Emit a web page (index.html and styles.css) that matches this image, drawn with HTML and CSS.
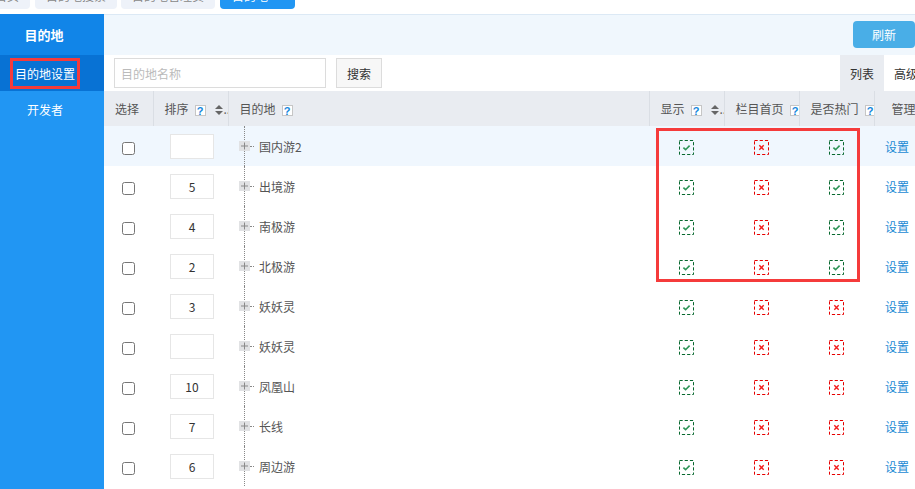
FILE: index.html
```html
<!DOCTYPE html>
<html lang="zh-CN">
<head>
    <meta charset="UTF-8">
    <meta name="viewport" content="width=device-width, initial-scale=1.0">
    <title>目的地设置</title>
    <link rel="stylesheet" href="styles.css">
</head>
<body>

    <svg class="defs" width="0" height="0" aria-hidden="true">
        <symbol id="ok" viewBox="0 0 15 15">
            <rect x="0.5" y="0.5" width="14" height="14" fill="none" stroke="#08692f" stroke-dasharray="3.2 2"/>
            <path d="M4.4 7.6 L6.6 9.7 L10.6 5.6" fill="none" stroke="#2e9558" stroke-width="1.6"/>
        </symbol>
        <symbol id="no" viewBox="0 0 15 15">
            <rect x="0.5" y="0.5" width="14" height="14" fill="none" stroke="#e60000" stroke-dasharray="3.2 2"/>
            <path d="M5.3 5.3 L9.7 9.7 M9.7 5.3 L5.3 9.7" fill="none" stroke="#f31c1c" stroke-width="1.4"/>
        </symbol>
        <symbol id="plus" viewBox="0 0 11 10">
            <path d="M2 5 H9 M5.5 1.5 V8.5" fill="none" stroke="#8a8a8a" stroke-width="1"/>
        </symbol>
        <symbol id="sorter" viewBox="0 0 8 10">
            <path d="M0 4 L4 0 L8 4 Z M0 6 L4 10 L8 6 Z" fill="#666"/>
        </symbol>
    </svg>

    <div class="tabs-top">
        <span class="tab tab-cut">首页</span>
        <span class="tab">目的地搜索</span>
        <span class="tab">目的地管理员</span>
        <span class="tab tab-active">目的地 ×</span>
    </div>

    <div class="layout">
        <aside class="side">
            <div class="side-title">目的地</div>
            <a href="#" class="side-item active"><span class="side-mark">目的地设置</span></a>
            <a href="#" class="side-item">开发者</a>
        </aside>

        <main class="main">
            <div class="main-head">
                <button type="button" class="btn-refresh">刷新</button>
            </div>

            <div class="toolbar">
                <form class="search">
                    <input type="text" class="search-input" placeholder="目的地名称">
                    <button type="button" class="btn-search">搜索</button>
                </form>
                <div class="view-tabs">
                    <span class="view-tab current">列表</span>
                    <span class="view-tab">高级</span>
                </div>
            </div>

            <div class="grid">
                <table class="table">
                    <colgroup>
                        <col style="width:49px">
                        <col style="width:75px">
                        <col style="width:421px">
                        <col style="width:75px">
                        <col style="width:75px">
                        <col style="width:75px">
                        <col style="width:80px">
                    </colgroup>
                    <thead>
                        <tr>
                            <th>选择</th>
                            <th>排序<span class="help">?</span><svg class="sort-icon"><use href="#sorter"/></svg><span class="more">..</span></th>
                            <th>目的地<span class="help">?</span></th>
                            <th>显示<span class="help">?</span><svg class="sort-icon"><use href="#sorter"/></svg><span class="more">..</span></th>
                            <th>栏目首页<span class="help">?</span></th>
                            <th>是否热门<span class="help">?</span></th>
                            <th class="h-manage">管理</th>
                        </tr>
                    </thead>
                    <tbody>
                        <tr class="hover">
                            <td class="c-check"><input type="checkbox"></td>
                            <td class="c-sort"><input type="text" class="sort-input" value=""></td>
                            <td class="c-tree"><div class="node"><svg class="node-plus"><use href="#plus"/></svg><span class="node-dash"></span>国内游2</div></td>
                            <td class="c-flag"><svg class="flag"><use href="#ok"/></svg></td>
                            <td class="c-flag"><svg class="flag"><use href="#no"/></svg></td>
                            <td class="c-flag"><svg class="flag"><use href="#ok"/></svg></td>
                            <td class="c-manage"><a href="#">设置</a></td>
                        </tr>
                        <tr>
                            <td class="c-check"><input type="checkbox"></td>
                            <td class="c-sort"><input type="text" class="sort-input" value="5"></td>
                            <td class="c-tree"><div class="node"><svg class="node-plus"><use href="#plus"/></svg><span class="node-dash"></span>出境游</div></td>
                            <td class="c-flag"><svg class="flag"><use href="#ok"/></svg></td>
                            <td class="c-flag"><svg class="flag"><use href="#no"/></svg></td>
                            <td class="c-flag"><svg class="flag"><use href="#ok"/></svg></td>
                            <td class="c-manage"><a href="#">设置</a></td>
                        </tr>
                        <tr>
                            <td class="c-check"><input type="checkbox"></td>
                            <td class="c-sort"><input type="text" class="sort-input" value="4"></td>
                            <td class="c-tree"><div class="node"><svg class="node-plus"><use href="#plus"/></svg><span class="node-dash"></span>南极游</div></td>
                            <td class="c-flag"><svg class="flag"><use href="#ok"/></svg></td>
                            <td class="c-flag"><svg class="flag"><use href="#no"/></svg></td>
                            <td class="c-flag"><svg class="flag"><use href="#ok"/></svg></td>
                            <td class="c-manage"><a href="#">设置</a></td>
                        </tr>
                        <tr>
                            <td class="c-check"><input type="checkbox"></td>
                            <td class="c-sort"><input type="text" class="sort-input" value="2"></td>
                            <td class="c-tree"><div class="node"><svg class="node-plus"><use href="#plus"/></svg><span class="node-dash"></span>北极游</div></td>
                            <td class="c-flag"><svg class="flag"><use href="#ok"/></svg></td>
                            <td class="c-flag"><svg class="flag"><use href="#no"/></svg></td>
                            <td class="c-flag"><svg class="flag"><use href="#ok"/></svg></td>
                            <td class="c-manage"><a href="#">设置</a></td>
                        </tr>
                        <tr>
                            <td class="c-check"><input type="checkbox"></td>
                            <td class="c-sort"><input type="text" class="sort-input" value="3"></td>
                            <td class="c-tree"><div class="node"><svg class="node-plus"><use href="#plus"/></svg><span class="node-dash"></span>妖妖灵</div></td>
                            <td class="c-flag"><svg class="flag"><use href="#ok"/></svg></td>
                            <td class="c-flag"><svg class="flag"><use href="#no"/></svg></td>
                            <td class="c-flag"><svg class="flag"><use href="#no"/></svg></td>
                            <td class="c-manage"><a href="#">设置</a></td>
                        </tr>
                        <tr>
                            <td class="c-check"><input type="checkbox"></td>
                            <td class="c-sort"><input type="text" class="sort-input" value=""></td>
                            <td class="c-tree"><div class="node"><svg class="node-plus"><use href="#plus"/></svg><span class="node-dash"></span>妖妖灵</div></td>
                            <td class="c-flag"><svg class="flag"><use href="#ok"/></svg></td>
                            <td class="c-flag"><svg class="flag"><use href="#no"/></svg></td>
                            <td class="c-flag"><svg class="flag"><use href="#no"/></svg></td>
                            <td class="c-manage"><a href="#">设置</a></td>
                        </tr>
                        <tr>
                            <td class="c-check"><input type="checkbox"></td>
                            <td class="c-sort"><input type="text" class="sort-input" value="10"></td>
                            <td class="c-tree"><div class="node"><svg class="node-plus"><use href="#plus"/></svg><span class="node-dash"></span>凤凰山</div></td>
                            <td class="c-flag"><svg class="flag"><use href="#ok"/></svg></td>
                            <td class="c-flag"><svg class="flag"><use href="#no"/></svg></td>
                            <td class="c-flag"><svg class="flag"><use href="#no"/></svg></td>
                            <td class="c-manage"><a href="#">设置</a></td>
                        </tr>
                        <tr>
                            <td class="c-check"><input type="checkbox"></td>
                            <td class="c-sort"><input type="text" class="sort-input" value="7"></td>
                            <td class="c-tree"><div class="node"><svg class="node-plus"><use href="#plus"/></svg><span class="node-dash"></span>长线</div></td>
                            <td class="c-flag"><svg class="flag"><use href="#ok"/></svg></td>
                            <td class="c-flag"><svg class="flag"><use href="#no"/></svg></td>
                            <td class="c-flag"><svg class="flag"><use href="#no"/></svg></td>
                            <td class="c-manage"><a href="#">设置</a></td>
                        </tr>
                        <tr>
                            <td class="c-check"><input type="checkbox"></td>
                            <td class="c-sort"><input type="text" class="sort-input" value="6"></td>
                            <td class="c-tree"><div class="node"><svg class="node-plus"><use href="#plus"/></svg><span class="node-dash"></span>周边游</div></td>
                            <td class="c-flag"><svg class="flag"><use href="#ok"/></svg></td>
                            <td class="c-flag"><svg class="flag"><use href="#no"/></svg></td>
                            <td class="c-flag"><svg class="flag"><use href="#no"/></svg></td>
                            <td class="c-manage"><a href="#">设置</a></td>
                        </tr>
                    </tbody>
                </table>

                <!-- highlight box drawn over the flag columns -->
                <div class="mark"></div>
            </div>
        </main>
    </div>

</body>
</html>
```

FILE: styles.css
```css
*,
*::before,
*::after {
    box-sizing: border-box;
}

html,
body {
    height: 100%;
}

body {
    font-family: "Noto Sans CJK SC", "Noto Sans", sans-serif;
    font-size: 12px;
    color: #555;
    padding: 0;
    margin: 0;
    overflow: hidden;
    background-color: #fff;
}

a {
    text-decoration: none;
}

button,
input {
    font: inherit;
}

.defs {
    position: absolute;
    width: 0;
    height: 0;
}

/* top tab strip, scrolled so only the bottom of the tabs shows */
.tabs-top {
    height: 14px;
    display: flex;
    align-items: flex-end;
    gap: 4px;
    padding-bottom: 5px;
    overflow: hidden;
}

.tab {
    flex-shrink: 0;
    height: 30px;
    line-height: 20px;
    padding: 7px 11px 0;
    background-color: #eef2f9;
    color: #888;
    border-radius: 0 0 4px 4px;
    white-space: nowrap;
}

.tab-cut {
    margin-left: -16px;
    margin-right: 1px;
}

.tab-active {
    background-color: #2196f3;
    color: #fff;
    margin-left: 1px;
    padding: 7px 12px 0;
}

.layout {
    display: flex;
    height: calc(100% - 14px);
}

/* sidebar */
.side {
    width: 104px;
    flex-shrink: 0;
    background-color: #2196f3;
    display: flex;
    flex-direction: column;
}

.side-title {
    height: 41px;
    line-height: 41px;
    padding-right: 16px;
    text-align: center;
    background-color: #1185e8;
    color: #fff;
    font-size: 13px;
    font-weight: bold;
}

.side-item {
    height: 36px;
    display: flex;
    align-items: center;
    justify-content: center;
    padding-right: 14px;
    color: #fff;
    font-size: 12px;
}

.side-item.active {
    background-color: #0872d4;
}

.side-mark {
    display: inline-block;
    line-height: 13px;
    padding: 6px 2px;
    border: 3px solid #f53b3b;
}

/* main */
.main {
    flex: 1;
    min-width: 0;
    overflow: hidden;
}

.main-head {
    height: 41px;
    border-top: 1px solid #dce9f5;
    background-color: #f0f7fd;
    display: flex;
    justify-content: flex-end;
    align-items: flex-start;
    padding-top: 6px;
}

.btn-refresh {
    width: 62px;
    height: 27px;
    border: 0;
    border-radius: 4px;
    background-color: #49aee7;
    color: #fff;
    font-size: 12px;
    cursor: pointer;
}

.toolbar {
    height: 36px;
    display: flex;
    align-items: center;
    justify-content: space-between;
    padding-left: 10px;
}

.search {
    display: flex;
    gap: 10px;
}

.search-input {
    width: 212px;
    height: 30px;
    border: 1px solid #dcdcdc;
    padding: 0 6px;
    color: #333;
    outline: none;
}

.search-input::placeholder {
    color: #bbb;
}

.btn-search {
    width: 46px;
    height: 30px;
    border: 1px solid #dcdcdc;
    background-color: #f7f7f7;
    color: #333;
    padding: 0;
}

.view-tabs {
    display: flex;
    align-self: stretch;
    margin-right: -13px;
}

.view-tab {
    display: flex;
    align-items: center;
    padding: 0 10px;
    color: #333;
    font-size: 12px;
    white-space: nowrap;
}

.view-tab.current {
    background-color: #e9ecf1;
}

/* table */
.grid {
    position: relative;
    overflow: hidden;
}

.table {
    width: 850px;
    table-layout: fixed;
    border-collapse: collapse;
}

.table th {
    height: 35px;
    padding: 0 0 0 11px;
    background-color: #e9ecf1;
    border-right: 1px solid #dadee4;
    font-weight: normal;
    text-align: left;
    color: #555;
    white-space: nowrap;
    overflow: hidden;
}

.table th.h-manage {
    padding-left: 17px;
}

.help {
    display: inline-block;
    width: 11px;
    height: 11px;
    margin-left: 6px;
    border: 1px solid #c6c6c6;
    background-color: #fff;
    color: #1486dc;
    font-family: "Liberation Sans", Arial, sans-serif;
    font-size: 11px;
    font-weight: bold;
    line-height: 10px;
    text-align: center;
    vertical-align: -1px;
}

.sort-icon {
    width: 8px;
    height: 10px;
    margin-left: 9px;
    vertical-align: -1px;
}

.more {
    color: #666;
    margin-left: 1px;
}

.table td {
    height: 40px;
    padding: 0;
}

.table tr.hover td {
    background-color: #f0f7fe;
}

.c-check {
    text-align: center;
}

.c-check input {
    width: 13px;
    height: 13px;
    margin: 0;
    vertical-align: middle;
}

.c-sort {
    padding-left: 17px !important;
}

.sort-input {
    display: block;
    width: 44px;
    height: 25px;
    border: 1px solid #e6e6e6;
    background-color: #fff;
    text-align: center;
    color: #333;
    font-size: 12px;
    padding: 0;
    outline: none;
}

.c-tree {
    position: relative;
    padding-left: 11px !important;
}

.c-tree::before {
    content: "";
    position: absolute;
    left: 16px;
    top: 0;
    bottom: 0;
    border-left: 1px dotted #888;
}

.node {
    position: relative;
    display: flex;
    align-items: center;
    color: #555;
}

.node-plus {
    width: 11px;
    height: 10px;
    background-color: #e1e2e4;
}

.node-dash {
    width: 4px;
    margin-right: 5px;
    border-top: 1px dotted #888;
}

.c-flag {
    text-align: center;
}

.flag {
    width: 15px;
    height: 15px;
    vertical-align: middle;
}

.c-manage {
    padding-left: 11px !important;
}

.c-manage a {
    color: #1a8ad4;
}

.mark {
    position: absolute;
    top: 37px;
    left: 552px;
    width: 204px;
    height: 154px;
    border: 3px solid #f53b3b;
}
```
